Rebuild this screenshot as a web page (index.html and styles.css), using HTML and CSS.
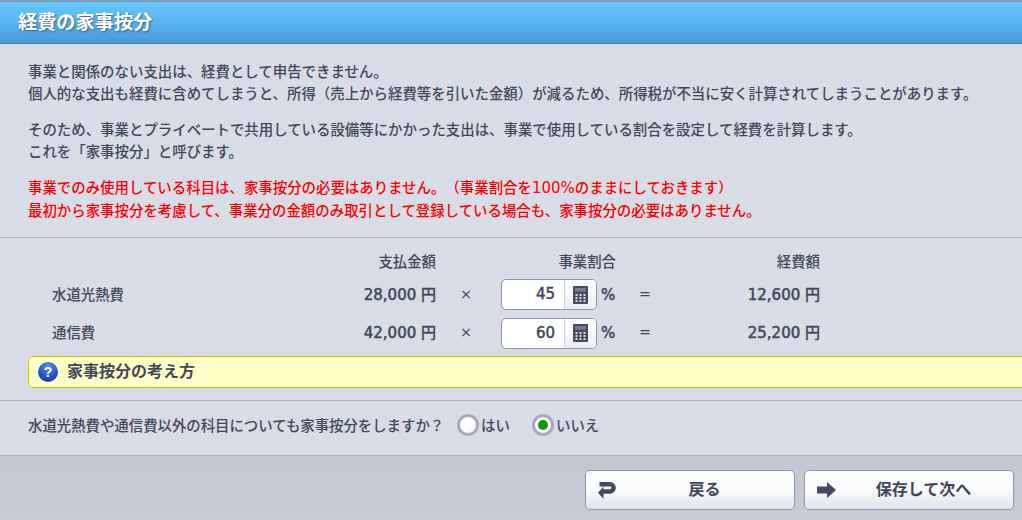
FILE: index.html
```html
<!DOCTYPE html>
<html lang="ja">
<head>
<meta charset="utf-8">
<title>経費の家事按分</title>
<link rel="stylesheet" href="styles.css">
</head>
<body>
<div class="page">
  <header class="title-bar"><h1>経費の家事按分</h1></header>
  <section class="intro">
    <p>事業と関係のない支出は、経費として申告できません。<br>個人的な支出も経費に含めてしまうと、所得（売上から経費等を引いた金額）が減るため、所得税が不当に安く計算されてしまうことがあります。</p>
    <p>そのため、事業とプライベートで共用している設備等にかかった支出は、事業で使用している割合を設定して経費を計算します。<br>これを「家事按分」と呼びます。</p>
    <p class="warn">事業でのみ使用している科目は、家事按分の必要はありません。（事業割合を<span class="latin">100%</span>のままにしておきます）<br>最初から家事按分を考慮して、事業分の金額のみ取引として登録している場合も、家事按分の必要はありません。</p>
  </section>
  <section class="calc">
    <div class="grid">
      <div></div><div class="head">支払金額</div><div></div><div class="rate-head">事業割合</div><div></div><div class="head">経費額</div>

      <div class="label">水道光熱費</div><div class="num">28,000 円</div><div class="op">×</div>
      <div class="rate">
        <div class="field"><span class="value">45</span><span class="calc-btn"><svg class="calc-icon" viewBox="0 0 15 18"><rect width="15" height="18" rx="1" fill="#454c60"/><rect x="2" y="2" width="11" height="3.500" fill="#767c8d"/><path fill="#d5d8e0" d="M2.500 8h2v2h-2zM6.500 8h2v2h-2zM10.500 8h2v2h-2zM2.500 11h2v2h-2zM6.500 11h2v2h-2zM10.500 11h2v2h-2zM2.500 14h2v2h-2zM6.500 14h2v2h-2zM10.500 14h2v2h-2z"/></svg></span></div>
        <span class="pct">%</span>
      </div>
      <div class="op">=</div><div class="num">12,600 円</div>

      <div class="label">通信費</div><div class="num">42,000 円</div><div class="op">×</div>
      <div class="rate">
        <div class="field"><span class="value">60</span><span class="calc-btn"><svg class="calc-icon" viewBox="0 0 15 18"><rect width="15" height="18" rx="1" fill="#454c60"/><rect x="2" y="2" width="11" height="3.500" fill="#767c8d"/><path fill="#d5d8e0" d="M2.500 8h2v2h-2zM6.500 8h2v2h-2zM10.500 8h2v2h-2zM2.500 11h2v2h-2zM6.500 11h2v2h-2zM10.500 11h2v2h-2zM2.500 14h2v2h-2zM6.500 14h2v2h-2zM10.500 14h2v2h-2z"/></svg></span></div>
        <span class="pct">%</span>
      </div>
      <div class="op">=</div><div class="num">25,200 円</div>
    </div>
    <div class="help"><span class="help-icon">?</span><span class="help-text">家事按分の考え方</span></div>
  </section>
  <section class="question">
    <span class="q-text">水道光熱費や通信費以外の科目についても家事按分をしますか？</span>
    <span class="radio-opt"><span class="radio"></span>はい</span>
    <span class="radio-opt"><span class="radio on"></span>いいえ</span>
  </section>
  <footer class="actions">
    <button class="btn" type="button"><svg class="btn-icon" viewBox="0 0 19 17"><path fill="none" stroke="#414a62" stroke-width="4.400" d="M1.500 2.200H12a3.650 3.650 0 0 1 0 7.300H5"/><path fill="#414a62" d="M5.500 4.500V17L0 10.800z"/></svg><span>戻る</span></button>
    <button class="btn" type="button"><svg class="btn-icon" viewBox="0 0 19 17"><path fill="#414a62" d="M0 4.500h10V0l9 8-9 8v-4.500H0z"/></svg><span>保存して次へ</span></button>
  </footer>
</div>
</body>
</html>
```

FILE: styles.css
```css
* { box-sizing: border-box; }
html, body { margin: 0; padding: 0; }
body {
  width: 1022px;
  height: 520px;
  overflow: hidden;
  font-family: "Noto Sans CJK JP", "Noto Sans", sans-serif;
  color: #3f465a;
  background: #d8dce7;
  text-spacing-trim: space-all;
}
.page { display: flex; flex-direction: column; height: 520px; overflow: hidden; }
.title-bar {
  height: 44px;
  flex: none;
  display: flex;
  align-items: center;
  padding: 0 18px 3px;
  background: linear-gradient(#66c4ff 0%, #60bcf8 30%, #479cd6 100%);
  border-top: 2px solid #7f9ab0;
  border-bottom: 1px solid #4d7a9c;
}
h1 {
  margin: 0;
  font-size: 19.200px;
  line-height: 36px;
  font-weight: 700;
  color: #fff;
  text-shadow: 1px 1px 2px #35607f;
}
.intro {
  flex: none;
  height: 194px;
  padding: 16px 28px 0;
  border-bottom: 1px solid #aeb2bb;
  font-size: 14.430px;
  line-height: 22px;
  font-weight: 500;
}
.intro p { margin: 0 0 14px; white-space: nowrap; }
.warn { color: #fb0000; }
.latin { font-family: "DejaVu Sans", sans-serif; font-size: 15px; }
.calc { flex: none; height: 163px; padding-top: 9px; border-bottom: 1px solid #aeb2bb; }
.grid {
  display: grid;
  grid-template-columns: 250px 134px 65px 126px 36px 157px;
  grid-template-rows: 28.500px 38.500px 38.500px;
  padding-left: 52px;
  font-size: 14.400px;
  font-weight: 500;
  align-items: center;
}
.head { text-align: right; padding-bottom: 2px; }
.label { padding-bottom: 3px; }
.num {
  text-align: right;
  padding-bottom: 3px;
  font-family: "DejaVu Sans", "Noto Sans CJK JP", sans-serif;
  font-weight: 400;
  font-size: 15px;
  -webkit-text-stroke: 0.5px #3f465a;
}
.rate-head { text-align: right; padding: 0 11px 2px 0; }
.op { text-align: center; padding: 0 5px 2px 0; font-family: "DejaVu Sans", sans-serif; font-size: 14.400px; }
.grid .op:nth-child(n+7) + .rate + .op { padding-right: 0; }
.rate { display: flex; align-items: center; }
.field {
  width: 96px;
  height: 31px;
  display: flex;
  background: #fff;
  border: 1px solid #8e92a0;
  border-radius: 5px;
}
.value {
  flex: 1;
  text-align: right;
  line-height: 29px;
  padding-right: 9px;
  font-family: "DejaVu Sans", sans-serif;
  font-weight: 400;
  font-size: 15px;
  -webkit-text-stroke: 0.5px #3f465a;
}
.calc-btn {
  width: 32px;
  display: flex;
  align-items: center;
  justify-content: center;
  border-left: 1px solid #d2d4da;
  background: linear-gradient(#ffffff, #eceef3);
  border-radius: 0 4px 4px 0;
}
.calc-icon { width: 15px; height: 18px; display: block; }
.pct {
  margin-left: 4px;
  font-family: "DejaVu Sans", sans-serif;
  font-size: 15px;
  -webkit-text-stroke: 0.5px #3f465a;
}
.help {
  margin: 3.500px -12px 0 28px;
  height: 32px;
  display: flex;
  align-items: center;
  gap: 9px;
  padding-left: 9px;
  background: #ffffc8;
  border: 1px solid #d3cf00;
  border-radius: 5px;
}
.help-icon {
  width: 20px;
  height: 20px;
  border-radius: 50%;
  background: radial-gradient(circle at 50% 25%, #5f8cf0 0%, #2453c8 55%, #12309a 100%);
  color: #fff;
  font: 700 14px/20px "Liberation Sans", sans-serif;
  text-align: center;
}
.help-text { font-size: 16px; font-weight: 700; line-height: 24px; padding-bottom: 5px; }
.question {
  flex: none;
  height: 55px;
  display: flex;
  align-items: center;
  padding: 0 0 7px 28px;
  font-size: 14.400px;
  font-weight: 500;
  border-bottom: 1px solid #aeb2bb;
}
.q-text { width: 429px; white-space: nowrap; }
.radio-opt { display: inline-flex; align-items: center; width: 75px; }
.radio {
  width: 22px;
  height: 22px;
  border-radius: 50%;
  border: 3px solid #a6aab4;
  background: linear-gradient(135deg, #ffffff 55%, #e6e7ec);
  box-shadow: inset 0 0 1px #ffffff;
  display: flex;
  align-items: center;
  justify-content: center;
  margin-right: 2px;
}
.radio.on::after {
  content: "";
  width: 10px;
  height: 10px;
  border-radius: 50%;
  background: #0a9a0a;
}
.actions {
  flex: 1;
  display: flex;
  justify-content: flex-end;
  align-items: flex-start;
  gap: 9px;
  padding: 14px 8px 0 0;
  background: linear-gradient(#c2c6d1, #c7cad4);
}
.btn {
  width: 210px;
  height: 40px;
  display: flex;
  align-items: center;
  padding: 0 12px;
  border: 1px solid #9497a3;
  border-radius: 5px;
  background: linear-gradient(#ffffff 0%, #f9fafb 50%, #dfe2ea 100%);
  color: #3f465a;
  font-family: inherit;
  font-size: 16px;
  font-weight: 700;
}
.btn span { flex: 1; text-align: center; padding: 0 0 5px 10px; }
.btn-icon { width: 19px; height: 17px; flex: none; }
```
